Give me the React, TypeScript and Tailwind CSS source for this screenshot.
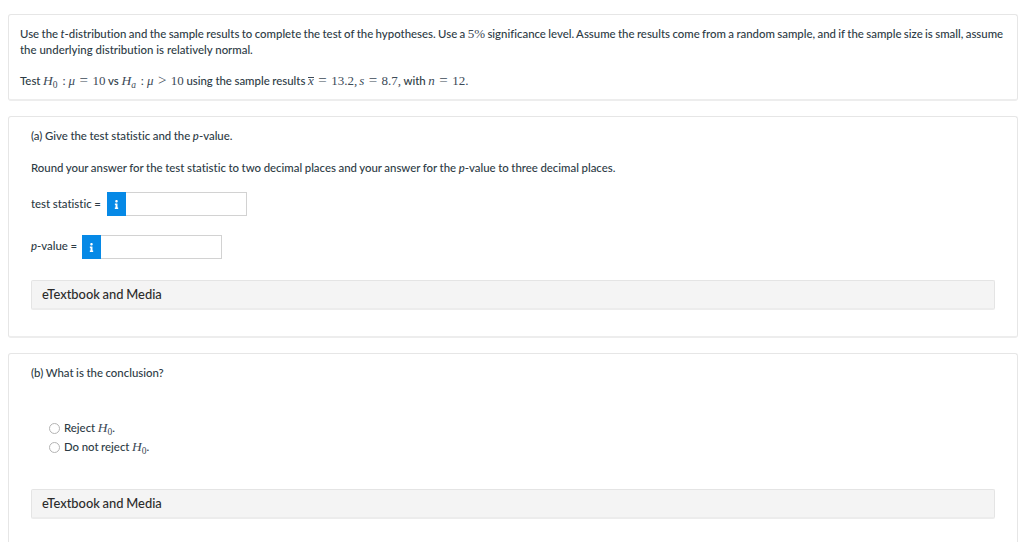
import type { ReactNode } from 'react';
import { FaInfo } from 'react-icons/fa';

// Inline math symbols, set in a serif face
const MathText = ({ children }: { children: ReactNode }) => (
  <span className="font-['Liberation_Serif',serif] text-[13px] leading-none [word-spacing:0px] text-[#3c4a57]">
    {children}
  </span>
);

const Hypothesis = ({ sub, italic = false }: { sub: string; italic?: boolean }) => (
  <>
    <i className="text-[13.5px]">H</i>
    <span className={`relative top-[3px] text-[9.5px] ${italic ? 'italic' : ''}`}>{sub}</span>
  </>
);

// Relation sign with the wide spacing used around it in formulas
const Rel = ({ children }: { children: ReactNode }) => (
  <span className="inline-block w-[17.4px] text-center text-[15px] leading-none">{children}</span>
);

const Colon = () => <span className="inline-block w-[11px] pl-[2px] text-center leading-none">:</span>;

const Card = ({ className, children }: { className: string; children: ReactNode }) => (
  <section className={`rounded-[3px] border border-b-2 border-[#e6e6e6] border-b-[#ededed] bg-white ${className}`}>
    {children}
  </section>
);

const AnswerInput = ({ label }: { label: string }) => (
  <div className="flex h-6">
    <button type="button" className="flex w-[19px] items-center justify-center bg-[#0689e6] text-white">
      <FaInfo className="size-[9px]" />
    </button>
    <input
      type="text"
      aria-label={label}
      className="w-[120.5px] border border-l-0 border-[#d2d2d2] bg-white px-2 outline-none"
    />
  </div>
);

const MediaBar = () => (
  <button
    type="button"
    className="flex h-[30px] w-full items-center rounded-[2px] border border-b-2 border-[#e4e4e4] border-b-[#ececec] bg-[#f4f4f4] pb-px pl-[10px] text-[12.9px] [word-spacing:-0.5px] text-[#2b2b2b]"
  >
    eTextbook and Media
  </button>
);

const Option = ({ children }: { children: ReactNode }) => (
  <label className="flex items-center gap-1">
    <input
      type="radio"
      name="conclusion"
      className="size-[11px] appearance-none rounded-full border border-[#b4b4b4] bg-white"
    />
    <span>{children}</span>
  </label>
);

const App = () => {
  return (
    <div className="h-[542px] overflow-hidden bg-white pt-[14px] pr-[6px] pl-2 font-['Lato',sans-serif] text-[11.4px] leading-4 font-medium text-[#2d3b45] [font-variant-ligatures:none] [word-spacing:-0.3px]">
      {/* Question */}
      <Card className="h-[87px] pt-[11px] pl-[11px]">
        <p className="whitespace-nowrap">
          <span className="[word-spacing:-0.48px]">
            Use the <i>t</i>-distribution and the sample results to complete the test of the hypotheses. Use a{' '}
            <MathText>5%</MathText> significance level. Assume the results come from a random sample, and if the
            sample size is small, assume
          </span>
          <br />
          <span className="[word-spacing:0.1px]">the underlying distribution is relatively normal.</span>
        </p>
        <p className="mt-[15px] whitespace-nowrap">
          Test{' '}
          <MathText>
            <Hypothesis sub="0" />
            <Colon />
            <i>μ</i>
            <Rel>=</Rel>10
          </MathText>{' '}
          vs{' '}
          <MathText>
            <Hypothesis sub="a" italic />
            <Colon />
            <i>μ</i>
            <Rel>&gt;</Rel>10
          </MathText>{' '}
          using the sample results{' '}
          <MathText>
            <i className="inline-block border-t border-[#3c4a57] leading-[0.5]">x</i>
            <Rel>=</Rel>13.2,<i className="ml-[2px]">s</i>
            <Rel>=</Rel>8.7,
          </MathText>{' '}
          with{' '}
          <MathText>
            <i>n</i>
            <Rel>=</Rel>12.
          </MathText>
        </p>
      </Card>

      {/* Part (a) */}
      <Card className="mt-[15px] h-[222px] pt-[11px] pr-[22px] pl-[22px]">
        <p>
          (a) Give the test statistic and the <i>p</i>-value.
        </p>
        <p className="mt-4">
          Round your answer for the test statistic to two decimal places and your answer for the <i>p</i>-value to
          three decimal places.
        </p>
        <div className="mt-4 flex items-center">
          <span className="w-[76px] whitespace-nowrap">test statistic =</span>
          <AnswerInput label="test statistic" />
        </div>
        <div className="mt-[19px] flex items-center">
          <span className="w-[51px] pb-[2px] whitespace-nowrap">
            <i>p</i>-value =
          </span>
          <AnswerInput label="p-value" />
        </div>
        <div className="mt-[21px]">
          <MediaBar />
        </div>
      </Card>

      {/* Part (b) */}
      <Card className="mt-[15px] h-[240px] pt-[11px] pr-[22px] pl-[22px]">
        <p>(b) What is the conclusion?</p>
        <div className="mt-[39px] flex flex-col gap-[3px] pl-[18px]">
          <Option>
            Reject <MathText><Hypothesis sub="0" /></MathText>.
          </Option>
          <Option>
            Do not reject <MathText><Hypothesis sub="0" /></MathText>.
          </Option>
        </div>
        <div className="mt-[34px]">
          <MediaBar />
        </div>
      </Card>
    </div>
  );
};

export default App;
